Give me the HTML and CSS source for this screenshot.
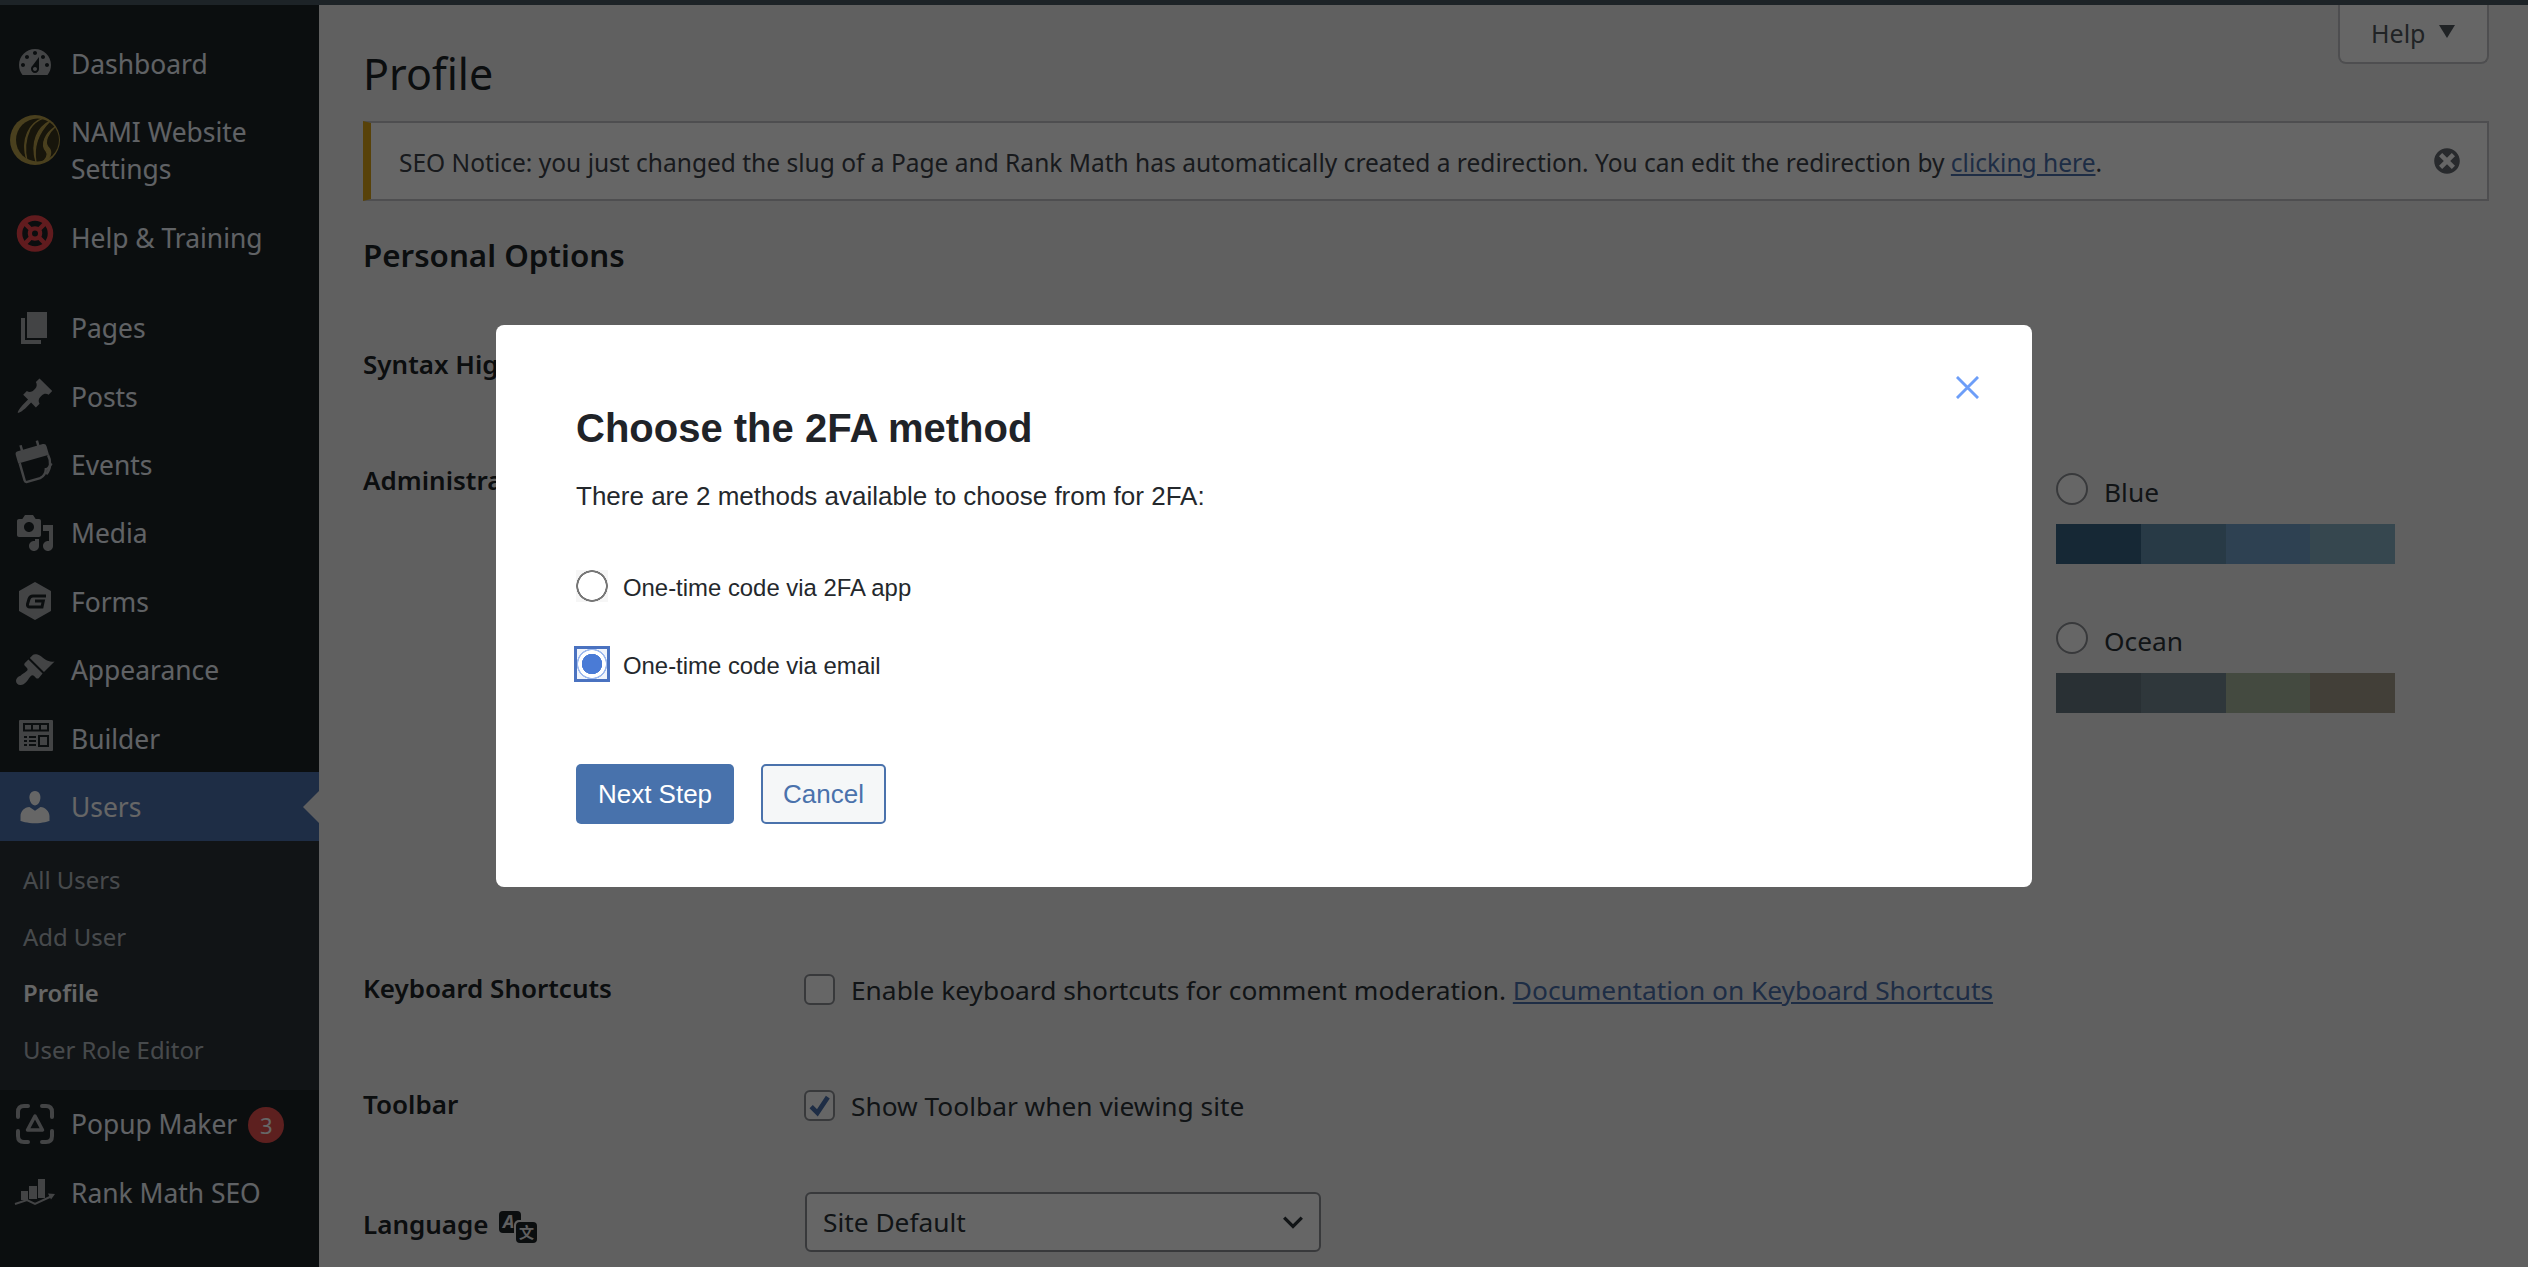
FILE: index.html
```html
<!DOCTYPE html>
<html lang="en">
<head>
<meta charset="utf-8">
<title>Profile</title>
<link rel="stylesheet" href="styles.css">
</head>
<body>
<div class="topbar"></div>
<div class="layout">
  <nav class="sidebar">
    <a class="item"><svg class="ico" viewBox="0 0 20 20"><path d="M3.76 16h12.48c1.1-1.37 1.76-3.11 1.76-5 0-4.42-3.58-8-8-8s-8 3.58-8 8c0 1.89.66 3.63 1.76 5zM10 4c.55 0 1 .45 1 1s-.45 1-1 1-1-.45-1-1 .45-1 1-1zM6 6c.55 0 1 .45 1 1s-.45 1-1 1-1-.45-1-1 .45-1 1-1zm8 0c.55 0 1 .45 1 1s-.45 1-1 1-1-.45-1-1 .45-1 1-1zm-5.37 5.55L12 7v6c0 1.1-.9 2-2 2s-2-.9-2-2c0-.57.24-1.08.63-1.45zM4 10c.55 0 1 .45 1 1s-.45 1-1 1-1-.45-1-1 .45-1 1-1zm12 0c.55 0 1 .45 1 1s-.45 1-1 1-1-.45-1-1 .45-1 1-1zm-5 3c0-.55-.45-1-1-1s-1 .45-1 1 .45 1 1 1 1-.45 1-1z"/></svg><span>Dashboard</span></a>
    <a class="item item-tall"><svg class="ico" viewBox="0 0 40 40"><circle cx="20" cy="10" r="25" fill="#baa04b"/><circle cx="22.500" cy="10" r="21.500" fill="#3b351c"/><path d="M29-12C15-8 5 8 12 31Q8 14 15-1 20-9 29-12ZM35-9C23-3 15 12 21 32 18 16 24 2 35-9ZM40-3C31 3 25 14 31 21 34 25 31 30 26 33 36 30 38 22 33 17 29 12 33 3 40-3Z" fill="#baa04b" stroke="#baa04b" stroke-width="1.200" stroke-linejoin="round"/></svg><span>NAMI Website<br>Settings</span></a>
    <a class="item"><svg class="ico" viewBox="0 0 40 40"><circle cx="20" cy="16.500" r="15.500" fill="none" stroke="#f2454b" stroke-width="5.500"/><circle cx="20" cy="16.500" r="5" fill="none" stroke="#f2454b" stroke-width="4.500"/><path d="M7.500 4l25 25M32.500 4l-25 25" stroke="#f2454b" stroke-width="4.500"/><circle cx="20" cy="16.500" r="3" fill="#1d2327"/></svg><span>Help &amp; Training</span></a>
    <div class="sep"></div>
    <a class="item"><svg class="ico" viewBox="0 0 20 20"><path d="M6 15V2h10v13H6zm-1 1h8v2H3V5h2v11z"/></svg><span>Pages</span></a>
    <a class="item"><svg class="ico" viewBox="0 0 20 20"><path d="M10.440 3.020l1.820-1.820 6.360 6.350-1.830 1.820c-1.050-.68-2.480-.57-3.410.36l-.75.75c-.92.93-1.040 2.350-.35 3.410l-1.830 1.820-2.410-2.410-2.800 2.790c-.42.42-3.380 2.710-3.800 2.290s1.860-3.390 2.280-3.810l2.790-2.790L4.100 9.360l1.830-1.820c1.050.69 2.480.57 3.400-.36l.75-.75c.93-.92 1.050-2.350.36-3.410z"/></svg><span>Posts</span></a>
    <a class="item"><svg class="ico" viewBox="0 0 40 40"><g transform="rotate(-16 20 20)"><path d="M7 3h26a3 3 0 0 1 3 3v9H4V6a3 3 0 0 1 3-3z"/><path d="M10-2h2.500v6H10zM27-2h2.500v6H27z"/><path d="M5.500 15V33a2 2 0 0 0 2 2H21c5-1 7-4 8-7 3 .5 5-2 7-4" fill="none" stroke="#a7aaad" stroke-width="2.500"/><path d="M35 15c1.500 6-1 14-7 18" fill="none" stroke="#a7aaad" stroke-width="2.500"/></g></svg><span>Events</span></a>
    <a class="item"><svg class="ico" viewBox="0 0 20 20"><path d="M13 11V4c0-.55-.45-1-1-1h-1.670L9 1H5L3.670 3H2c-.55 0-1 .45-1 1v7c0 .55.45 1 1 1h10c.55 0 1-.45 1-1zM7 4.500c1.380 0 2.500 1.120 2.500 2.500S8.380 9.500 7 9.500 4.500 8.380 4.500 7 5.620 4.500 7 4.500zM14 6h5v10.500c0 1.380-1.120 2.500-2.500 2.500S14 17.880 14 16.500s1.120-2.500 2.500-2.500c.17 0 .34.02.5.05V9h-3V6zm-4 8.050V13h2v3.500c0 1.380-1.120 2.500-2.500 2.500S7 17.880 7 16.500 8.120 14 9.500 14c.17 0 .34.02.5.05z"/></svg><span>Media</span></a>
    <a class="item"><svg class="ico" viewBox="0 0 40 40"><path d="M20 2L35 10.500V29.500L20 38L5 29.500V10.500Z" stroke="#a7aaad" stroke-width="2" stroke-linejoin="round"/><path d="M31 15H18q-3 0-4 3l-1.500 5q-.5 3 2.500 3H27l1.300-6H20" fill="none" stroke="#1d2327" stroke-width="3"/></svg><span>Forms</span></a>
    <a class="item"><svg class="ico" viewBox="0 0 20 20"><path d="M14.480 11.060L7.410 3.990l1.500-1.500c.5-.56 2.300-.47 3.510.32 1.210.8 1.430 1.280 2.910 2.100 1.180.64 2.450 1.260 4.450.85zm-.71.71L6.700 4.700 4.930 6.470c-.39.39-.39 1.020 0 1.410l1.060 1.060c.39.39.39 1.030 0 1.420-.6.6-1.430 1.110-2.210 1.690-.35.26-.7.53-1.010.84C1.430 13.230.5 14.300.5 15.450c0 1.150.95 1.930 2.100 2.050 1.160.12 2.080-.61 2.900-1.400.31-.31.59-.66.84-1.010.58-.78 1.090-1.610 1.690-2.210.39-.39 1.030-.39 1.420 0l1.060 1.060c.39.39 1.020.39 1.410 0z"/></svg><span>Appearance</span></a>
    <a class="item"><svg class="ico" viewBox="0 0 40 40"><rect x="4" y="2" width="34" height="31" rx="1"/><g fill="none" stroke="#1d2327" stroke-width="2"><rect x="9" y="6" width="24" height="6.500"/><path d="M17 6v6.500M25 6v6.500"/><rect x="24" y="18" width="9" height="10"/></g><path d="M9 18h3v2H9zM14 18h7v2h-7zM9 22h3v2H9zM14 22h7v2h-7zM9 26h3v2H9zM14 26h7v2h-7z" fill="#1d2327"/></svg><span>Builder</span></a>
    <a class="item active"><svg class="ico" viewBox="0 0 20 20"><path d="M10 9.250c-2.270 0-2.730-3.440-2.730-3.440C7 4.020 7.820 2 9.970 2c2.160 0 2.980 2.020 2.710 3.810 0 0-.41 3.440-2.680 3.440zm0 2.570L12.720 10c2.390 0 4.520 2.330 4.520 4.530v2.490s-3.650 1.130-7.240 1.130c-3.650 0-7.240-1.130-7.240-1.130v-2.490c0-2.250 1.940-4.480 4.470-4.480z"/></svg><span>Users</span></a>
    <div class="submenu">
      <a class="subitem">All Users</a>
      <a class="subitem">Add User</a>
      <a class="subitem current">Profile</a>
      <a class="subitem">User Role Editor</a>
    </div>
    <a class="item"><svg class="ico" viewBox="0 0 40 40"><path d="M3 13V8q0-6 6-6h4M27 2h4q6 0 6 6v5M37 27v5q0 6-6 6h-4M13 38H9q-6 0-6-6v-5" fill="none" stroke="#a7aaad" stroke-width="4" stroke-linecap="round"/><path d="M20 12L27.500 26H12.500Z" fill="none" stroke="#a7aaad" stroke-width="3.500" stroke-linejoin="round"/></svg><span>Popup Maker</span><b class="badge">3</b></a>
    <a class="item"><svg class="ico" viewBox="0 0 40 40"><path d="M6 19h7v9H6zM14 14h8v13h-8zM23 7h7v19h-7z"/><path d="M0 32l12-4 8 4 17-8" fill="none" stroke="#a7aaad" stroke-width="2"/><path d="M40 22l-7-.5 3 6z"/></svg><span>Rank Math SEO</span></a>
  </nav>
  <main class="content">
    <a class="help-tab">Help <i class="caret"></i></a>
    <h1 class="title">Profile</h1>
    <div class="notice">
      <p>SEO Notice: you just changed the slug of a Page and Rank Math has automatically created a redirection. You can edit the redirection by <a href="#">clicking here</a>.</p>
      <svg class="dismiss" viewBox="0 0 20 20"><path d="M10 2c4.420 0 8 3.580 8 8s-3.580 8-8 8-8-3.580-8-8 3.580-8 8-8zm5 11l-3-3 3-3-2-2-3 3-3-3-2 2 3 3-3 3 2 2 3-3 3 3z"/></svg>
    </div>
    <h2 class="section">Personal Options</h2>
    <div class="row row-syntax"><div class="label">Syntax Highlighting</div></div>
    <div class="row row-admin">
      <div class="label">Administration Color Scheme</div>
      <div class="schemes">
        <div class="scheme">
          <label class="scheme-name"><i class="wp-radio"></i><span>Blue</span></label>
          <div class="swatch"><i class="c1"></i><i class="c2"></i><i class="c3"></i><i class="c4"></i></div>
        </div>
        <div class="scheme">
          <label class="scheme-name"><i class="wp-radio"></i><span>Ocean</span></label>
          <div class="swatch"><i class="o1"></i><i class="o2"></i><i class="o3"></i><i class="o4"></i></div>
        </div>
      </div>
    </div>
    <div class="row row-keys"><div class="label">Keyboard Shortcuts</div><div class="cell"><i class="wp-check"></i><span>Enable keyboard shortcuts for comment moderation. <a href="#">Documentation on Keyboard Shortcuts</a></span></div></div>
    <div class="row row-toolbar"><div class="label">Toolbar</div><div class="cell"><i class="wp-check"><svg viewBox="0 0 24 24"><path d="M4 13l6 6L20 4" fill="none" stroke="#4b71ad" stroke-width="4.500"/></svg></i><span>Show Toolbar when viewing site</span></div></div>
    <div class="row row-lang">
      <div class="label lang-label"><span>Language</span>
        <svg class="lang-ico" viewBox="0 0 38 32"><rect x="0" y="0" width="22" height="22" rx="4" fill="#1d2327"/><text x="4" y="17" class="lang-a">A</text><rect x="15" y="9" width="23" height="23" rx="5" fill="#f0f0f1"/><rect x="17" y="11" width="21" height="21" rx="4" fill="#1d2327"/><text x="20" y="27" class="lang-z">文</text></svg>
      </div>
      <div class="select"><span>Site Default</span><svg class="chev" viewBox="0 0 20 12"><path d="M2 2l8 8 8-8" fill="none" stroke="#2c3338" stroke-width="3"/></svg></div>
    </div>
  </main>
</div>
<div class="overlay">
  <div class="modal">
    <svg class="close" viewBox="0 0 24 24"><path d="M1 1l22 22M23 1L1 23" fill="none" stroke="#6d9ef8" stroke-width="3"/></svg>
    <h2 class="modal-title">Choose the 2FA method</h2>
    <p class="modal-text">There are 2 methods available to choose from for 2FA:</p>
    <div class="option opt-first"><i class="radio"></i><span>One-time code via 2FA app</span></div>
    <div class="option opt-second"><i class="radio checked"></i><span>One-time code via email</span></div>
    <div class="actions">
      <a class="btn primary">Next Step</a>
      <a class="btn secondary">Cancel</a>
    </div>
  </div>
</div>
</body>
</html>
```
FILE: styles.css
```css
* { box-sizing: border-box; }
html, body { margin: 0; height: 1267px; overflow: hidden; }
body { background: #f0f0f1; font-family: "Noto Sans", sans-serif; color: #1d2327; }
a { text-decoration: none; }
.topbar { height: 5px; background: #1d2327; position: relative; z-index: 2; }
.layout { display: flex; height: 1262px; overflow: hidden; }

.sidebar { width: 319px; flex: none; background: #1d2327; padding-top: 24px; color: #f0f6fc; font-size: 26.400px; }
.item { display: flex; align-items: center; height: 68.450px; padding-left: 15px; line-height: 37px; color: #f0f6fc; }
.item > span { padding-top: 2px; }
.item-tall { height: 105.500px; }
.ico { width: 40px; height: 40px; flex: none; margin-right: 16px; fill: #a7aaad; overflow: visible; }
.sep { height: 22px; }
.item.active { background: #4b71ad; color: #fff; position: relative; }
.item.active .ico { fill: #fff; }
.item.active::after { content: ""; position: absolute; right: 0; top: 50%; margin-top: -16px; border: 16px solid transparent; border-left-width: 0; border-right-color: #f0f0f1; }
.submenu { background: #2c3338; padding: 11px 0 11px; font-size: 23.900px; }
.subitem { display: block; height: 56.700px; line-height: 56.700px; padding-left: 23px; color: rgba(240, 246, 252, .7); }
.subitem.current { color: #fff; font-weight: 600; }
.badge { margin: 3px 0 0 11px; width: 36px; height: 36px; border-radius: 50%; background: #e8504f; color: #fff; font-size: 22px; font-weight: 400; line-height: 36px; text-align: center; }

.content { flex: 1; min-width: 0; padding: 0 39px 0 44px; font-size: 26.300px; }
.help-tab { float: right; width: 151px; height: 59px; line-height: 56px; padding-left: 31px; margin-left: 20px; background: #fff; border: 2px solid #c3c4c7; border-top: 0; border-radius: 0 0 8px 8px; color: #50575e; font-size: 25px; }
.caret { display: inline-block; margin-left: 7px; vertical-align: 5px; border: 8px solid transparent; border-top: 13px solid #50575e; border-bottom: 0; }
.title { margin: 39px 0 0; font-size: 43px; font-weight: 400; line-height: 60px; }
.notice { display: flex; align-items: center; justify-content: space-between; height: 80px; margin-top: 17px; padding: 0 24px 0 28px; background: #fff; border: 2px solid #c3c4c7; border-left: 8px solid #dba617; color: #3c434a; font-size: 24.520px; }
.notice p { margin: 3px 0 0; }
.notice a, .cell a { color: #4b71ad; text-decoration: underline; }
.dismiss { width: 32px; height: 32px; fill: #646970; }
.section { margin: 34px 0 1px; font-size: 31.300px; font-weight: 600; line-height: 40px; }
.row { display: grid; grid-template-columns: 442px 1fr; }
.label { font-size: 26px; font-weight: 600; line-height: 36px; white-space: nowrap; }
.cell { display: flex; align-items: center; height: 38px; line-height: 36px; color: #2c3338; white-space: nowrap; }
.cell span { padding-top: 2px; }
.row-syntax { margin-top: 71px; height: 36px; }
.row-admin { margin-top: 80px; height: 251px; }
.schemes { margin-left: 1251px; width: 339px; padding-top: 11px; }
.scheme { margin-bottom: 58px; }
.scheme-name { display: flex; align-items: center; height: 32px; color: #2c3338; }
.scheme-name span { padding-top: 5px; }
.wp-radio { width: 32px; height: 32px; flex: none; margin-right: 16px; border: 2px solid #8c8f94; border-radius: 50%; background: #fff; }
.swatch { display: grid; grid-template-columns: repeat(4, 1fr); height: 40px; margin-top: 19px; }
.c1 { background: #376484; } .c2 { background: #6491af; } .c3 { background: #73a3cd; } .c4 { background: #87b2c6; }
.o1 { background: #667882; } .o2 { background: #758993; } .o3 { background: #aab9a0; } .o4 { background: #a59d8c; }
.row-keys { margin-top: 257px; }
.row-toolbar { margin-top: 78px; }
.row-lang { margin-top: 82px; }
.wp-check { width: 31px; height: 31px; flex: none; margin: 0 16px 0 -1px; background: #fff; border: 2px solid #8c8f94; border-radius: 6px; display: flex; align-items: center; justify-content: center; }
.wp-check svg { width: 25px; height: 25px; }
.lang-label { display: flex; align-items: center; height: 36px; }
.lang-ico { flex: none; width: 38px; height: 32px; margin: 5px 0 0 10px; }
.lang-a { font: italic 700 18px "Noto Sans", sans-serif; fill: #f0f0f1; }
.lang-z { font: 700 15px "Noto Sans CJK SC", sans-serif; fill: #f0f0f1; }
.select { display: flex; align-items: center; justify-content: space-between; width: 516px; height: 60px; margin-top: -14px; padding: 0 15px 0 16px; background: #fff; border: 2px solid #8c8f94; border-radius: 6px; color: #2c3338; }
.chev { width: 22px; height: 14px; }

.overlay { position: absolute; top: 5px; left: 0; right: 0; bottom: 0; z-index: 1; display: flex; align-items: flex-start; padding: 320px 0 0 496px; background: rgba(0, 0, 0, .6); font-family: "Liberation Sans", Arial, sans-serif; }
.modal { position: relative; width: 1536px; height: 562px; padding: 78px 80px 0; background: #fff; border-radius: 8px; color: #24282c; }
.close { position: absolute; left: 1460px; top: 51px; width: 23px; height: 23px; }
.modal-title { margin: 0; font-size: 40px; font-weight: 700; line-height: 50px; color: #1f2328; }
.modal-text { margin: 25px 0 0; font-size: 26px; line-height: 36px; }
.option { display: flex; align-items: center; height: 36px; font-size: 23.900px; }
.option span { padding-top: 4px; }
.opt-first { margin-top: 54px; }
.opt-second { margin-top: 42px; }
.radio { width: 32px; height: 32px; flex: none; margin-right: 15px; background: radial-gradient(circle, #fff 0 13.500px, #777 14px 15.500px, #f6f6f6 16px); }
.radio.checked { width: 36px; height: 36px; margin: 0 13px 0 -2px; border: 3px solid #4a72c0; background: radial-gradient(circle, #4a7bd6 0 10px, #fff 10.500px 13.500px, #9db9ee 14px 15px, #f0f4fb 15.500px); }
.actions { display: flex; gap: 27px; margin-top: 82px; }
.btn { display: flex; align-items: center; justify-content: center; height: 60px; border-radius: 5px; font-size: 26px; }
.primary { width: 158px; background: #4872ac; color: #fff; }
.secondary { width: 125px; background: #f5f7f8; border: 2px solid #4a72ac; color: #4a72ac; }
```
